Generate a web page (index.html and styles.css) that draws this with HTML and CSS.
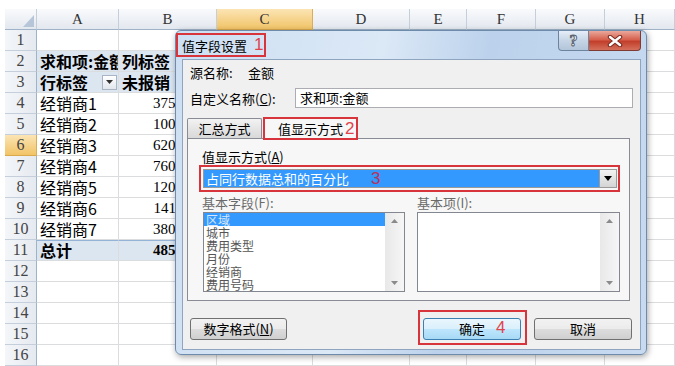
FILE: index.html
```html
<!DOCTYPE html>
<html lang="zh-CN">
<head>
  <meta charset="UTF-8" />
  <title>值字段设置</title>
  <link rel="stylesheet" href="styles.css">
</head>
<body>
  <div class="sheet">
    <div class="row head">
      <div class="corner"><svg width="12" height="14" viewBox="0 0 12 14"><polygon points="11,1 11,13 0,13" fill="#b6c6d8"/></svg></div>
      <div>A</div><div>B</div><div class="sel">C</div><div>D</div><div>E</div><div>F</div><div>G</div><div>H</div>
    </div>
    <div class="row"><div class="rh">1</div><div></div><div></div><div></div><div></div><div></div><div></div><div></div><div></div></div>
    <div class="row"><div class="rh">2</div><div class="pv b">求和项:金额</div><div class="pv b">列标签</div><div></div><div></div><div></div><div></div><div></div><div></div></div>
    <div class="row"><div class="rh">3</div><div class="pv b filter">行标签<span class="fbtn"><svg width="7" height="4" viewBox="0 0 7 4"><polygon points="0,0 7,0 3.5,4" fill="#333"/></svg></span></div><div class="pv b">未报销</div><div></div><div></div><div></div><div></div><div></div><div></div></div>
    <div class="row"><div class="rh">4</div><div>经销商1</div><div class="num">37568000</div><div></div><div></div><div></div><div></div><div></div><div></div></div>
    <div class="row"><div class="rh">5</div><div>经销商2</div><div class="num">10052000</div><div></div><div></div><div></div><div></div><div></div><div></div></div>
    <div class="row"><div class="rh sel">6</div><div>经销商3</div><div class="num">62013000</div><div></div><div></div><div></div><div></div><div></div><div></div></div>
    <div class="row"><div class="rh">7</div><div>经销商4</div><div class="num">76008000</div><div></div><div></div><div></div><div></div><div></div><div></div></div>
    <div class="row"><div class="rh">8</div><div>经销商5</div><div class="num">12025000</div><div></div><div></div><div></div><div></div><div></div><div></div></div>
    <div class="row"><div class="rh">9</div><div>经销商6</div><div class="num">14115000</div><div></div><div></div><div></div><div></div><div></div><div></div></div>
    <div class="row"><div class="rh">10</div><div>经销商7</div><div class="num">38026000</div><div></div><div></div><div></div><div></div><div></div><div></div></div>
    <div class="row"><div class="rh">11</div><div class="tot b">总计</div><div class="tot b num">48580000</div><div></div><div></div><div></div><div></div><div></div><div></div></div>
    <div class="row"><div class="rh">12</div><div></div><div></div><div></div><div></div><div></div><div></div><div></div><div></div></div>
    <div class="row"><div class="rh">13</div><div></div><div></div><div></div><div></div><div></div><div></div><div></div><div></div></div>
    <div class="row"><div class="rh">14</div><div></div><div></div><div></div><div></div><div></div><div></div><div></div><div></div></div>
    <div class="row"><div class="rh">15</div><div></div><div></div><div></div><div></div><div></div><div></div><div></div><div></div></div>
    <div class="row"><div class="rh">16</div><div></div><div></div><div></div><div></div><div></div><div></div><div></div><div></div></div>
  </div>

  <div class="dialog">
    <div class="titlebar">
      <div class="mark title-mark">值字段设置<em>1</em></div>
      <div class="caps">
        <span class="cap-help">?</span>
        <span class="cap-close"><svg width="16" height="12" viewBox="0 0 16 12"><path d="M3 2 L13 10 M13 2 L3 10" stroke="#7c2c22" stroke-width="4.5" stroke-linecap="round"/><path d="M3 2 L13 10 M13 2 L3 10" stroke="#fff" stroke-width="2.4" stroke-linecap="round"/></svg></span>
      </div>
    </div>
    <div class="client">
      <div class="src"><span>源名称:</span><span>金额</span></div>
      <div class="name-row"><label>自定义名称(<u>C</u>):</label><div class="input">求和项:金额</div></div>
      <div class="tabs">
        <div class="tab">汇总方式</div>
        <div class="tab active">值显示方式<em>2</em></div>
      </div>
      <div class="panel">
        <div class="lbl">值显示方式(<u>A</u>)</div>
        <div class="combo-mark">
          <div class="combo">
            <span class="combo-text">占同行数据总和的百分比<em>3</em></span>
            <span class="drop"><svg width="8" height="5" viewBox="0 0 8 5"><polygon points="0,0 8,0 4,5" fill="#000"/></svg></span>
          </div>
        </div>
        <div class="fields">
          <div class="field left">
            <div class="lbl dim">基本字段(F):</div>
            <div class="list">
              <div class="items">
                <div class="on">区域</div>
                <div>城市</div>
                <div>费用类型</div>
                <div>月份</div>
                <div>经销商</div>
                <div>费用号码</div>
              </div>
              <div class="scroll">
                <svg width="7" height="4" viewBox="0 0 7 4"><polygon points="0,4 7,4 3.5,0" fill="#8a8a8a"/></svg>
                <svg width="7" height="4" viewBox="0 0 7 4"><polygon points="0,0 7,0 3.5,4" fill="#8a8a8a"/></svg>
              </div>
            </div>
          </div>
          <div class="field right">
            <div class="lbl dim">基本项(I):</div>
            <div class="list">
              <div class="items"></div>
              <div class="scroll">
                <svg width="7" height="4" viewBox="0 0 7 4"><polygon points="0,4 7,4 3.5,0" fill="#8a8a8a"/></svg>
                <svg width="7" height="4" viewBox="0 0 7 4"><polygon points="0,0 7,0 3.5,4" fill="#8a8a8a"/></svg>
              </div>
            </div>
          </div>
        </div>
      </div>
      <div class="btns">
        <div class="btn first">数字格式(<u>N</u>)</div>
        <div class="ok-mark"><div class="btn ok">确定<em>4</em></div></div>
        <div class="btn cancel">取消</div>
      </div>
    </div>
  </div>
</body>
</html>
```

FILE: styles.css
```css
body {
  margin: 0;
  width: 675px;
  height: 366px;
  overflow: hidden;
  position: relative;
  background: #fff;
  font-family: "Noto Sans CJK SC", sans-serif;
  color: #000;
}
em {
  font-style: normal;
  color: #e0444b;
  font-family: "Liberation Sans", sans-serif;
  font-size: 17px;
}

/* sheet */
.sheet {
  padding: 9px 0 0 5px;
}
.row {
  display: grid;
  grid-template-columns: 32px 82px 98px 96px 97px 57px 69px 69px 70px;
  height: 21px;
}
.row > div {
  box-sizing: border-box;
  border-right: 1px solid #dadcdd;
  border-bottom: 1px solid #dadcdd;
  padding: 0 3px;
  font-size: 16px;
  line-height: 20px;
  white-space: nowrap;
  overflow: hidden;
}
.head > div {
  background: linear-gradient(#f9fafc, #e3e8ef);
  border-right-color: #c5cfdb;
  border-bottom-color: #9fb2c7;
  font-family: "Liberation Serif", serif;
  font-size: 15px;
  color: #333;
  text-align: center;
}
.head > .corner {
  display: flex;
  align-items: flex-end;
  justify-content: flex-end;
  padding: 0 1px 1px 0;
}
.row > .rh {
  background: linear-gradient(90deg, #f4f6f9, #e5eaf0);
  border-right-color: #9fb2c7;
  border-bottom-color: #c5cfdb;
  font-family: "Liberation Serif", serif;
  color: #444;
  text-align: center;
  padding: 0;
}
.row > .sel {
  background: linear-gradient(#fbe4b4, #f1c467);
  border-right-color: #d9ad5a;
  border-bottom-color: #d9a94c;
}
.row > .pv {
  background: #dce6f1;
}
.row > .tot {
  background: #dce6f1;
  border-top: 1px solid #95b3d7;
  line-height: 19px;
}
.b {
  font-weight: bold;
}
.row > .num {
  text-align: right;
  font-family: "Liberation Serif", serif;
  font-size: 15px;
}
.row > .filter {
  display: flex;
  align-items: center;
  justify-content: space-between;
  padding-right: 1px;
}
.fbtn {
  width: 15px;
  height: 15px;
  flex: none;
  box-sizing: border-box;
  border: 1px solid #a9b5c4;
  background: linear-gradient(#fff, #e2e7ed);
  display: flex;
  align-items: center;
  justify-content: center;
}

/* dialog */
.dialog {
  position: absolute;
  left: 175px;
  top: 30px;
  width: 472px;
  height: 325px;
  box-sizing: border-box;
  border: 1px solid #6e8bab;
  border-radius: 6px;
  background: linear-gradient(100deg, #cddff3, #dbe8f6 40%, #bcd2ec 60%, #c7daf0);
  box-shadow: 1px 2px 6px rgba(0, 0, 0, 0.35);
  display: flex;
  flex-direction: column;
  font-size: 13px;
}
.titlebar {
  height: 28px;
  flex: none;
  display: flex;
  align-items: flex-start;
}
.title-mark {
  margin-top: 2px;
  width: 90px;
  height: 24px;
  box-sizing: border-box;
  border: 2px solid #d8343c;
  padding-left: 4px;
  display: flex;
  align-items: center;
  gap: 7px;
}
.caps {
  margin-left: auto;
  margin-right: 5px;
  display: flex;
}
.cap-help {
  width: 31px;
  height: 20px;
  box-sizing: border-box;
  border: 1px solid #6d849e;
  border-top: none;
  border-radius: 0 0 0 4px;
  background: linear-gradient(#e6eef8, #c6d5e6 50%, #b3c5da);
  text-align: center;
  font-family: "Liberation Serif", serif;
  font-weight: bold;
  font-size: 16px;
  line-height: 19px;
  color: #fff;
  -webkit-text-stroke: 1px #5c6470;
}
.cap-close {
  width: 52px;
  height: 20px;
  box-sizing: border-box;
  border: 1px solid #7f3a32;
  border-top: none;
  border-left: none;
  border-radius: 0 0 4px 0;
  background: linear-gradient(#eaa89c, #d6614e 45%, #c23f2b 55%, #d4705c);
  display: flex;
  align-items: center;
  justify-content: center;
}
.client {
  flex: 1;
  margin: 0 5px 4px 6px;
  border: 1px solid #8ea4bf;
  background: #f0f0f0;
  display: flex;
  flex-direction: column;
}
.src {
  margin: 6px 0 0 7px;
  line-height: 14px;
  display: flex;
}
.src span:first-child {
  width: 58px;
}
.name-row {
  margin: 8px 7px 0 7px;
  height: 20px;
  display: flex;
  align-items: center;
}
.name-row label {
  width: 105px;
}
.input {
  flex: 1;
  height: 20px;
  box-sizing: border-box;
  border: 1px solid #abadb3;
  background: #fff;
  padding-left: 4px;
  line-height: 18px;
}
.tabs {
  margin: 9px 0 0 4px;
  height: 21px;
  display: flex;
  align-items: flex-end;
}
.tab {
  width: 75px;
  height: 20px;
  box-sizing: border-box;
  border: 1px solid #898c95;
  border-bottom: none;
  border-radius: 2px 2px 0 0;
  background: linear-gradient(#f3f3f3, #e5e5e5 50%, #d9d9d9);
  text-align: center;
  line-height: 19px;
}
.tab.active {
  width: 95px;
  height: 23px;
  margin: 0 0 -2px 1px;
  border: 2px solid #d8343c;
  border-radius: 0;
  background: #f7f7f7;
  position: relative;
  z-index: 1;
  display: flex;
  align-items: center;
  padding-left: 13px;
  gap: 2px;
}
.panel {
  margin: 0 10px 0 4px;
  height: 163px;
  box-sizing: border-box;
  border: 1px solid #898c95;
  background: #f7f7f7;
  padding: 11px 0 0 14px;
}
.lbl {
  line-height: 14px;
}
.combo-mark {
  margin: 1px 0 0 -3px;
  width: 421px;
  height: 27px;
  box-sizing: border-box;
  border: 2px solid #d8343c;
  padding: 2px 1px 2px 2px;
}
.combo {
  height: 19px;
  box-sizing: border-box;
  border: 1px solid #9a9a9a;
  background: #3399ff;
  display: flex;
}
.combo-text {
  flex: 1;
  padding-left: 2px;
  color: #fff;
  display: flex;
  align-items: center;
}
.combo-text em {
  margin-left: 22px;
  color: #b8325a;
}
.drop {
  width: 16px;
  border-left: 1px solid #9a9a9a;
  background: linear-gradient(#f3f3f3, #d4d4d4);
  display: flex;
  align-items: center;
  justify-content: center;
}
.fields {
  margin-top: 4px;
  display: grid;
  grid-template-columns: 203px 203px;
  column-gap: 12px;
}
.fields .lbl {
  line-height: 13px;
}
.dim {
  color: #6a6a6a;
}
.list {
  margin-top: 3px;
  height: 80px;
  box-sizing: border-box;
  border: 1px solid #828790;
  background: #fff;
  display: flex;
}
.left .list {
  margin-left: 1px;
}
.items {
  flex: 1;
}
.items div {
  height: 13px;
  line-height: 13px;
  padding-left: 2px;
  font-size: 12px;
  color: #555;
}
.items .on {
  background: #3399ff;
  color: #d6e7fb;
}
.scroll {
  width: 19px;
  background: linear-gradient(90deg, #e8e8e8, #f6f6f6);
  display: flex;
  flex-direction: column;
  justify-content: space-between;
  align-items: center;
  padding: 6px 0;
  box-sizing: border-box;
}
.btns {
  margin-top: 9px;
  display: flex;
  align-items: flex-start;
}
.btn {
  width: 97px;
  height: 22px;
  margin-top: 8px;
  box-sizing: border-box;
  border: 1px solid #707070;
  border-radius: 3px;
  background: linear-gradient(#f2f2f2, #ebebeb 50%, #dddddd 50%, #cfcfcf);
  text-align: center;
  line-height: 20px;
}
.btn.first {
  margin-left: 7px;
}
.ok-mark {
  margin-left: auto;
  border: 2px solid #d8343c;
  padding: 6px 4px 3px 3px;
}
.btn.ok {
  width: 98px;
  margin-top: 0;
  border-color: #3c7fb1;
  background: linear-gradient(#eaf6fd, #d9f0fc 50%, #bee6fd 50%, #a7d9f5);
  position: relative;
}
.btn.ok em {
  position: absolute;
  left: 72px;
  top: 0;
  line-height: 18px;
}
.btn.cancel {
  width: 98px;
  margin: 8px 8px 0 7px;
}
```
